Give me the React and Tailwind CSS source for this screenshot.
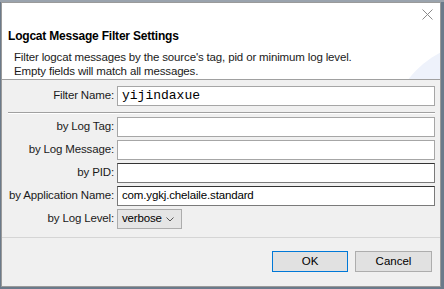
import React from "react";

const FIELDS = [
  { label: "by Log Tag:", value: "" },
  { label: "by Log Message:", value: "" },
  { label: "by PID:", value: "", dark: true },
  { label: "by Application Name:", value: "com.ygkj.chelaile.standard", dark: true },
];

const Row = ({ label, children }) => (
  <div className="flex items-center h-[20px]">
    <div className="w-[115px] pr-[3px] text-right text-[11.5px] tracking-[-0.15px] text-[#1a1a1a] whitespace-nowrap">
      {label}
    </div>
    {children}
  </div>
);

const Field = ({ value, dark, mono }) => (
  <div
    className={`flex-1 h-[20px] bg-white border flex items-center px-[4px] text-black ${
      dark ? "border-[#7a7a7a] border-t-[#333]" : "border-[#a6a6a6]"
    } ${mono ? "font-['Liberation_Mono',monospace] text-[13px]" : "text-[11.5px] tracking-[-0.15px]"}`}
  >
    {value}
  </div>
);

const App = () => {
  return (
    <div className="w-[444px] h-[289px] bg-[#6b7a8a] relative overflow-hidden font-['Liberation_Sans',Arial,sans-serif]">
      <div className="h-[2px] bg-[#9aa3ad]" />
      <div className="absolute left-[1px] top-[2px] w-[440px] h-[285px] border border-[#9a9a9a] bg-[#f0f0f0] flex flex-col">
        {/* banner */}
        <div className="relative h-[77px] bg-white overflow-hidden border-b border-[#a0a0a0]">
          <div className="absolute left-[385px] top-[38px] w-[240px] h-[200px] rounded-full bg-[#eef2fb]" />
          <svg className="absolute right-[7px] top-[6px]" width="11" height="11" viewBox="0 0 11 11">
            <path d="M0.5 0.5L10.5 10.5M10.5 0.5L0.5 10.5" stroke="#8a8a8a" strokeWidth="1" fill="none" />
          </svg>
          <div className="relative pt-[25px] pl-[6px] text-[12px] tracking-[-0.2px] font-bold text-black leading-[16px]">
            Logcat Message Filter Settings
          </div>
          <div className="relative pl-[12px] pt-[6px] text-[11.5px] tracking-[-0.15px] text-[#1a1a1a] leading-[14px]">
            <div>Filter logcat messages by the source's tag, pid or minimum log level.</div>
            <div>Empty fields will match all messages.</div>
          </div>
        </div>

        {/* form */}
        <div className="pt-[6px] pr-[5px] border-b border-[#d5d5d5] h-[158px]">
          <Row label="Filter Name:">
            <Field value="yijindaxue" mono />
          </Row>
          <div className="ml-[6px] mt-[6px] mb-[3px] h-[2px] border-t border-[#a0a0a0] border-b border-b-white" />
          <div className="flex flex-col gap-[3px]">
            {FIELDS.map((f) => (
              <Row key={f.label} label={f.label}>
                <Field value={f.value} dark={f.dark} />
              </Row>
            ))}
            <Row label="by Log Level:">
              <div className="w-[65px] h-[20px] bg-[#e5e5e5] border border-[#acacac] flex items-center justify-between pl-[4px] pr-[7px] text-[11.5px] tracking-[-0.15px] text-black">
                <span>verbose</span>
                <svg width="8" height="5" viewBox="0 0 8 5">
                  <path d="M0.5 0.5L4 4L7.5 0.5" stroke="#555" strokeWidth="1" fill="none" />
                </svg>
              </div>
            </Row>
          </div>
        </div>

        {/* buttons */}
        <div className="flex justify-end gap-[7px] pt-[13px] pr-[8px]">
          <button className="w-[76px] h-[21px] bg-[#e1e1e1] border border-[#0078d7] text-[11.5px] text-black">
            OK
          </button>
          <button className="w-[77px] h-[21px] bg-[#e1e1e1] border border-[#adadad] text-[11.5px] text-black">
            Cancel
          </button>
        </div>
      </div>
    </div>
  );
};

export default App;
